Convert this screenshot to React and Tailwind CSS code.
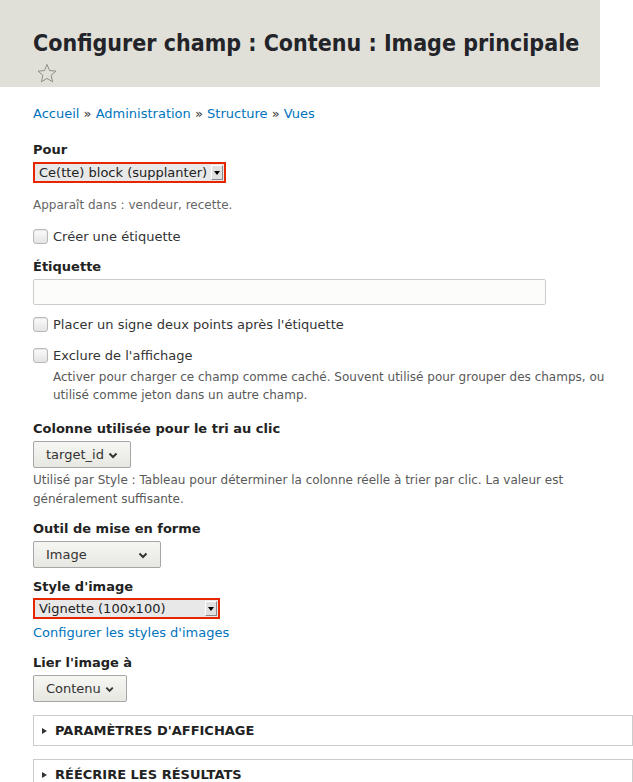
import React from "react";

const Chevron = () => (
  <svg width="10" height="7" viewBox="0 0 10 7" className="ml-1 mt-[1px]">
    <path d="M1.5 1.5 L5 5 L8.5 1.5" fill="none" stroke="#333" strokeWidth="2" />
  </svg>
);

const Checkbox = ({ label, children }) => (
  <div className="flex items-start">
    <span className="mt-[1px] w-[15px] h-[15px] shrink-0 rounded-[3px] border border-[#b8b8b8] bg-gradient-to-b from-[#fbfbfb] to-[#e4e4e4] shadow-[inset_0_1px_1px_rgba(0,0,0,0.08)]" />
    <div className="ml-[5px]">
      <div className="text-[13px] leading-[17px] text-[#333]">{label}</div>
      {children}
    </div>
  </div>
);

const Label = ({ children }) => (
  <div className="text-[13px] font-bold leading-[17px] text-[#222]">{children}</div>
);

const ButtonSelect = ({ value, width }) => (
  <div
    className={`flex items-center justify-between h-[27px] px-[12px] rounded-[2px] border border-[#a6a6a6] bg-gradient-to-b from-[#f6f6f3] to-[#e7e7e2] text-[13px] text-[#333] ${width}`}
  >
    <span>{value}</span>
    <Chevron />
  </div>
);

const OldSelect = ({ value, width }) => (
  <div className={`flex h-[21px] border-2 border-[#e62600] bg-[#e8e8e8] ${width}`}>
    <span className="flex-1 pl-[4px] text-[13px] leading-[17px] text-[#222]">{value}</span>
    <span className="m-[1px] w-[12px] flex items-center justify-center bg-[#e0e0e0] border-r border-b border-[#888] border-t border-l border-t-white border-l-white">
      <span className="w-0 h-0 border-l-[3px] border-r-[3px] border-t-[4px] border-l-transparent border-r-transparent border-t-black" />
    </span>
  </div>
);

const Details = ({ title }) => (
  <div className="flex items-center h-[31px] ml-[33px] border border-[#ccc] pl-[8px] text-[13px] font-bold text-[#222]">
    <span className="w-0 h-0 border-t-[3px] border-b-[3px] border-l-[5px] border-t-transparent border-b-transparent border-l-[#333] mr-[8px]" />
    {title}
  </div>
);

export default function App() {
  return (
    <div className="font-['DejaVu_Sans',sans-serif] bg-white min-h-[782px] overflow-hidden text-[#333]">
      <div className="w-[600px] h-[87px] bg-[#e0e0d8] pl-[33px] pt-[29px]">
        <h1 className="font-['DejaVu_Sans_Condensed','DejaVu_Sans',sans-serif] text-[23px] font-bold leading-[28px] whitespace-nowrap text-[#232429]">
          Configurer champ : Contenu : Image principale
        </h1>
        <svg width="22" height="21" viewBox="0 0 22 21" className="mt-[6px] ml-[3px]">
          <path
            d="M11 1.5 L13.6 7.6 L20 8.1 L15.1 12.3 L16.6 18.8 L11 15.4 L5.4 18.8 L6.9 12.3 L2 8.1 L8.4 7.6 Z"
            fill="none"
            stroke="#8e8e86"
            strokeWidth="1"
          />
        </svg>
      </div>

      <div className="pl-[33px] pr-[20px]">
        <div className="mt-[18px] text-[13px] leading-[17px]">
          <a className="text-[#0074bd]">Accueil</a> <span className="text-[#333]">»</span>{" "}
          <a className="text-[#0074bd]">Administration</a> <span className="text-[#333]">»</span>{" "}
          <a className="text-[#0074bd]">Structure</a> <span className="text-[#333]">»</span>{" "}
          <a className="text-[#0074bd]">Vues</a>
        </div>

        <div className="mt-[19px]">
          <Label>Pour</Label>
          <div className="mt-[4px]">
            <OldSelect value="Ce(tte) block (supplanter)" width="w-[193px]" />
          </div>
          <div className="mt-[13px] text-[12px] leading-[18px] text-[#666]">Apparaît dans : vendeur, recette.</div>
        </div>

        <div className="mt-[14px]">
          <Checkbox label="Créer une étiquette" />
        </div>

        <div className="mt-[13px]">
          <Label>Étiquette</Label>
          <div className="mt-[4px] w-[513px] h-[26px] rounded-[2px] border border-[#ccc] bg-[#fcfcfa]" />
        </div>

        <div className="mt-[11px]">
          <Checkbox label="Placer un signe deux points après l'étiquette" />
        </div>

        <div className="mt-[14px]">
          <Checkbox label="Exclure de l'affichage">
            <div className="mt-[4px] text-[12px] leading-[18px] text-[#595959]">
              Activer pour charger ce champ comme caché. Souvent utilisé pour grouper des champs, ou utilisé comme jeton dans un autre champ.
            </div>
          </Checkbox>
        </div>

        <div className="mt-[16px]">
          <Label>Colonne utilisée pour le tri au clic</Label>
          <div className="mt-[4px] flex">
            <ButtonSelect value="target_id" width="w-[98px]" />
          </div>
          <div className="mt-[3px] text-[12px] leading-[19px] text-[#595959]">
            Utilisé par Style : Tableau pour déterminer la colonne réelle à trier par clic. La valeur est généralement suffisante.
          </div>
        </div>

        <div className="mt-[11px]">
          <Label>Outil de mise en forme</Label>
          <div className="mt-[4px] flex">
            <ButtonSelect value="Image" width="w-[128px]" />
          </div>
        </div>

        <div className="mt-[10px]">
          <Label>Style d'image</Label>
          <div className="mt-[3px]">
            <OldSelect value="Vignette (100x100)" width="w-[187px]" />
          </div>
          <a className="block mt-[5px] text-[13px] leading-[17px] text-[#0074bd]">Configurer les styles d'images</a>
        </div>

        <div className="mt-[13px]">
          <Label>Lier l'image à</Label>
          <div className="mt-[4px] flex">
            <ButtonSelect value="Contenu" width="w-[94px]" />
          </div>
        </div>
      </div>

      <div className="mt-[13px]">
        <Details title="PARAMÈTRES D'AFFICHAGE" />
      </div>
      <div className="mt-[13px]">
        <Details title="RÉÉCRIRE LES RÉSULTATS" />
      </div>
    </div>
  );
}
